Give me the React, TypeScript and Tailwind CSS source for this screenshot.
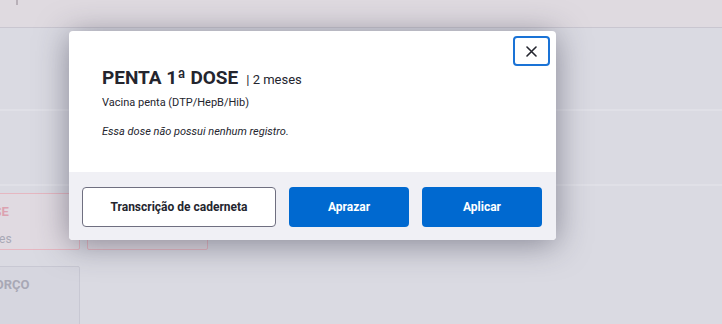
import React from 'react';

const font = { fontFamily: 'Roboto, "Noto Sans", Arial, sans-serif' };

function BackgroundPage() {
  return (
    <div className="h-[324px] w-[722px] overflow-hidden bg-[#dadae2]">
      <div className="h-[28px] border-b border-[#c9c6d0] bg-[#dfdae0]">
        <div className="ml-[16px] h-[5px] w-[2px] bg-[#b8b0b8]" />
      </div>
      <div className="mt-[81px] h-[2px] bg-[#e0e0e7]" />
      <div className="mt-[73px] h-[2px] bg-[#e0e0e7]" />
      <div className="-ml-[41px] mt-[7px] flex gap-[7px]">
        <div className="h-[57px] w-[121px] rounded-[2px] border border-[#e6b7c1] bg-[#e0dae1] pl-[16px] pt-[8px]">
          <div className="text-[13px] font-bold text-[#dca2b0]">DOSE</div>
          <div className="mt-[8px] text-[12px] text-[#a9a9b6]">meses</div>
        </div>
        <div className="h-[57px] w-[121px] rounded-[2px] border border-[#e6b7c1] bg-[#e0dae1]" />
      </div>
      <div className="-ml-[41px] mt-[16px] h-[60px] w-[121px] rounded-[2px] border border-[#c8c8d3] bg-[#d6d6df] pl-[12px] pt-[8px]">
        <div className="text-[13px] font-bold text-[#a8a8b5]">REFORÇO</div>
        <div className="mt-[10px] text-[11px] text-[#9fc2e6]">s</div>
      </div>
    </div>
  );
}

function DoseModal() {
  return (
    <div className="absolute left-[69px] top-[31px] w-[487px] overflow-hidden rounded-[4px] bg-white shadow-[0_4px_32px_rgba(50,50,70,0.5)]">
      <div className="relative h-[141px] px-[33px] pt-[36px]">
        <button
          type="button"
          className="absolute right-[6px] top-[5px] flex h-[30px] w-[37px] items-center justify-center rounded-[4px] border-2 border-[#1a73d6] bg-white"
        >
          <svg width="11" height="11" viewBox="0 0 11 11">
            <path d="M1 1 L10 10 M10 1 L1 10" stroke="#24252e" strokeWidth="1.6" strokeLinecap="round" />
          </svg>
        </button>
        <div className="flex items-baseline gap-[8px] text-[#24252e]">
          <span className="text-[19px] font-bold leading-[22px]">PENTA 1ª DOSE</span>
          <span className="text-[13px]">| 2 meses</span>
        </div>
        <p className="mt-[5px] text-[11px] leading-[16px] text-[#24252e]">Vacina penta (DTP/HepB/Hib)</p>
        <p className="mt-[13px] text-[11px] italic leading-[16px] text-[#24252e]">Essa dose não possui nenhum registro.</p>
      </div>
      <div className="flex gap-[13px] bg-[#f0f0f5] px-[13px] pb-[13px] pt-[15px]">
        <button
          type="button"
          className="h-[40px] w-[194px] rounded-[4px] border border-[#6f6f80] bg-white text-[12px] font-bold text-[#24252e]"
        >
          Transcrição de caderneta
        </button>
        <button type="button" className="h-[40px] w-[120px] rounded-[4px] bg-[#0069d0] text-[12px] font-bold text-white">
          Aprazar
        </button>
        <button type="button" className="h-[40px] w-[120px] rounded-[4px] bg-[#0069d0] text-[12px] font-bold text-white">
          Aplicar
        </button>
      </div>
    </div>
  );
}

export default function App() {
  return (
    <div className="relative h-[324px] w-[722px] overflow-hidden" style={font}>
      <BackgroundPage />
      <DoseModal />
    </div>
  );
}
